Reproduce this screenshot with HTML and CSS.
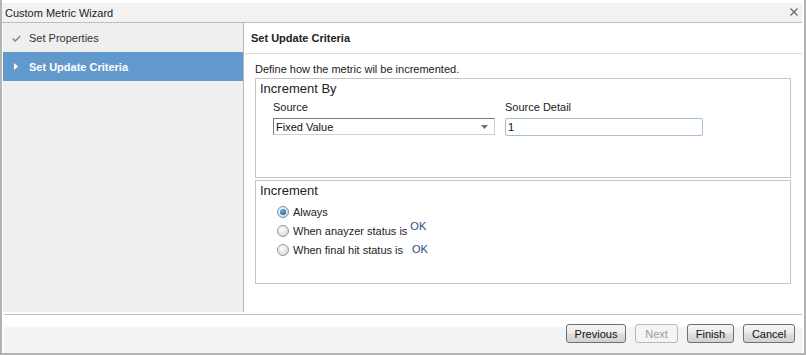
FILE: index.html
```html
<!DOCTYPE html>
<html lang="en">
<head>
  <meta charset="UTF-8" />
  <title>Custom Metric Wizard</title>
  <link rel="stylesheet" href="styles.css">
</head>
<body>
  <div class="window">
    <div class="titlebar">
      <span class="title">Custom Metric Wizard</span>
      <svg class="close" width="8" height="8" viewBox="0 0 8 8">
        <path d="M0.5 0.5 L7.5 7.5 M7.5 0.5 L0.5 7.5" stroke="#6a6a6a" stroke-width="1.3" fill="none"/>
      </svg>
    </div>

    <div class="main">
      <div class="sidebar">
        <div class="step done">
          <svg class="step-icon" width="9" height="7" viewBox="0 0 9 7">
            <path d="M0.8 3.6 L3.3 6 L8.2 1" stroke="#8c8c8c" stroke-width="1.6" fill="none"/>
          </svg>
          <span>Set Properties</span>
        </div>
        <div class="step active">
          <svg class="step-icon" width="9" height="7" viewBox="0 0 9 7">
            <path d="M2 0 L6 3.5 L2 7 Z" fill="#ffffff"/>
          </svg>
          <span>Set Update Criteria</span>
        </div>
      </div>

      <div class="panel">
        <div class="panel-header">Set Update Criteria</div>
        <div class="panel-body">
          <div class="desc">Define how the metric wil be incremented.</div>

          <div class="group group-by">
            <div class="group-title">Increment By</div>
            <div class="fields">
              <div class="field">
                <div class="field-label">Source</div>
                <div class="select">
                  <span>Fixed Value</span>
                  <svg class="arrow" width="7" height="4" viewBox="0 0 7 4">
                    <path d="M0 0 L7 0 L3.5 4 Z" fill="#6f6f6f"/>
                  </svg>
                </div>
              </div>
              <div class="field">
                <div class="field-label">Source Detail</div>
                <div class="textbox">1</div>
              </div>
            </div>
          </div>

          <div class="group group-inc">
            <div class="group-title">Increment</div>
            <div class="radios">
              <div class="radio-row">
                <span class="radio checked"></span>
                <span class="radio-label">Always</span>
              </div>
              <div class="radio-row">
                <span class="radio"></span>
                <span class="radio-label">When anayzer status is</span>
                <span class="ok ok-high">OK</span>
              </div>
              <div class="radio-row">
                <span class="radio"></span>
                <span class="radio-label">When final hit status is</span>
                <span class="ok ok-low">OK</span>
              </div>
            </div>
          </div>
        </div>
      </div>
    </div>

    <div class="footer">
      <button class="btn btn-prev">Previous</button>
      <button class="btn btn-next" disabled>Next</button>
      <button class="btn btn-finish">Finish</button>
      <button class="btn btn-cancel">Cancel</button>
    </div>
  </div>
</body>
</html>
```

FILE: styles.css
```css
* {
  box-sizing: border-box;
}

body {
  margin: 0;
  font-family: 'Liberation Sans', Arial, sans-serif;
  font-size: 11px;
  color: #222;
  background: #ffffff;
}

.window {
  width: 806px;
  height: 355px;
  border: 2px solid #b3b3b3;
  border-top: none;
  padding: 0 2px 0 1px;
  background: #ffffff;
  display: flex;
  flex-direction: column;
}

.titlebar {
  height: 23px;
  padding: 3px 4px 0 3px;
  margin-left: -1px;
  background: linear-gradient(#ffffff 0, #ffffff 3px, #f2f2f2 3px);
  border-bottom: 1px solid #bdbdbd;
  display: flex;
  align-items: center;
  justify-content: space-between;
}

.title {
  font-size: 11px;
  color: #222;
}

.close {
  margin-top: -1px;
}

.main {
  height: 289px;
  display: flex;
}

/* left step list */
.sidebar {
  width: 241px;
  background: #efefef;
  border-right: 1px solid #b8b8b8;
  padding-top: 1px;
}

.step {
  display: flex;
  align-items: center;
  padding-left: 9px;
  color: #333;
}

.step.done {
  height: 28px;
}

.step.active {
  height: 29px;
  background: #6299cd;
  color: #ffffff;
  font-weight: bold;
}

.step-icon {
  width: 9px;
  margin-right: 8px;
}

.panel {
  flex: 1;
  background: #ffffff;
  margin-left: 1px;
}

.panel-header {
  height: 31px;
  line-height: 30px;
  padding-left: 6px;
  font-weight: bold;
  color: #222;
  border-bottom: 1px solid #dedede;
}

.panel-body {
  padding: 8px 11px 0 10px;
}

.desc {
  line-height: 14px;
  margin-bottom: 2px;
}

.group {
  border: 1px solid #c6c6c6;
  padding: 2px 4px 0 4px;
}

.group-by {
  height: 100px;
}

.group-inc {
  height: 104px;
  margin-top: 2px;
}

.group-title {
  font-size: 13px;
  line-height: 15px;
  color: #222;
}

.fields {
  display: flex;
  gap: 10px;
  padding-left: 13px;
  margin-top: 4px;
}

.field-label {
  line-height: 14px;
  margin-bottom: 4px;
  color: #222;
}

.select {
  width: 222px;
  height: 17px;
  border: 1px solid #d0d0d0;
  border-top-color: #7a7a7a;
  border-left-color: #7a7a7a;
  display: flex;
  align-items: center;
  justify-content: space-between;
  padding: 0 6px 0 2px;
  color: #111;
}

.textbox {
  width: 198px;
  height: 18px;
  border: 1px solid #a9bfd6;
  border-radius: 2px;
  padding-left: 2px;
  line-height: 16px;
  color: #111;
}

.radios {
  padding-left: 17px;
  margin-top: 4px;
}

.radio-row {
  height: 19px;
  display: flex;
  align-items: center;
}

.radio {
  width: 12px;
  height: 12px;
  border-radius: 50%;
  border: 1px solid #9a9a9a;
  background: radial-gradient(circle at 40% 35%, #ffffff 0%, #e4e4e4 55%, #c8c8c8 100%);
  margin-right: 4px;
  position: relative;
}

.radio.checked {
  border-color: #6f8fb0;
}

.radio.checked::after {
  content: "";
  position: absolute;
  left: 2px;
  top: 2px;
  width: 6px;
  height: 6px;
  border-radius: 50%;
  background: radial-gradient(circle at 40% 35%, #6fb2e8 0%, #1f5f9e 80%);
}

.radio-label {
  color: #222;
}

.ok {
  color: #1e4f86;
}

.ok-high {
  margin-left: 3px;
  position: relative;
  top: -5px;
}

.ok-low {
  margin-left: 9px;
  position: relative;
  top: -1px;
}

/* button bar */
.footer {
  flex: 1;
  margin-top: 2px;
  margin-left: 1px;
  border-top: 1px solid #c0c0c0;
  background: linear-gradient(#ffffff 0, #ffffff 11px, #f3f3f3 13px, #f3f3f3 100%);
  display: flex;
  justify-content: flex-end;
  align-items: flex-start;
  gap: 9px;
  padding: 9px 7px 0 0;
}

.btn {
  height: 19px;
  font-family: inherit;
  font-size: 11px;
  color: #111;
  border: 1px solid #707070;
  border-radius: 3px;
  background: linear-gradient(#f4f4f4 0%, #ececec 48%, #dedede 52%, #d2d2d2 100%);
  padding: 0;
}

.btn-prev { width: 60px; }
.btn-next { width: 43px; }
.btn-finish { width: 47px; }
.btn-cancel { width: 52px; }

.btn:disabled {
  color: #9c9c9c;
  border-color: #b6b9bc;
  background: #f4f4f4;
}
```
